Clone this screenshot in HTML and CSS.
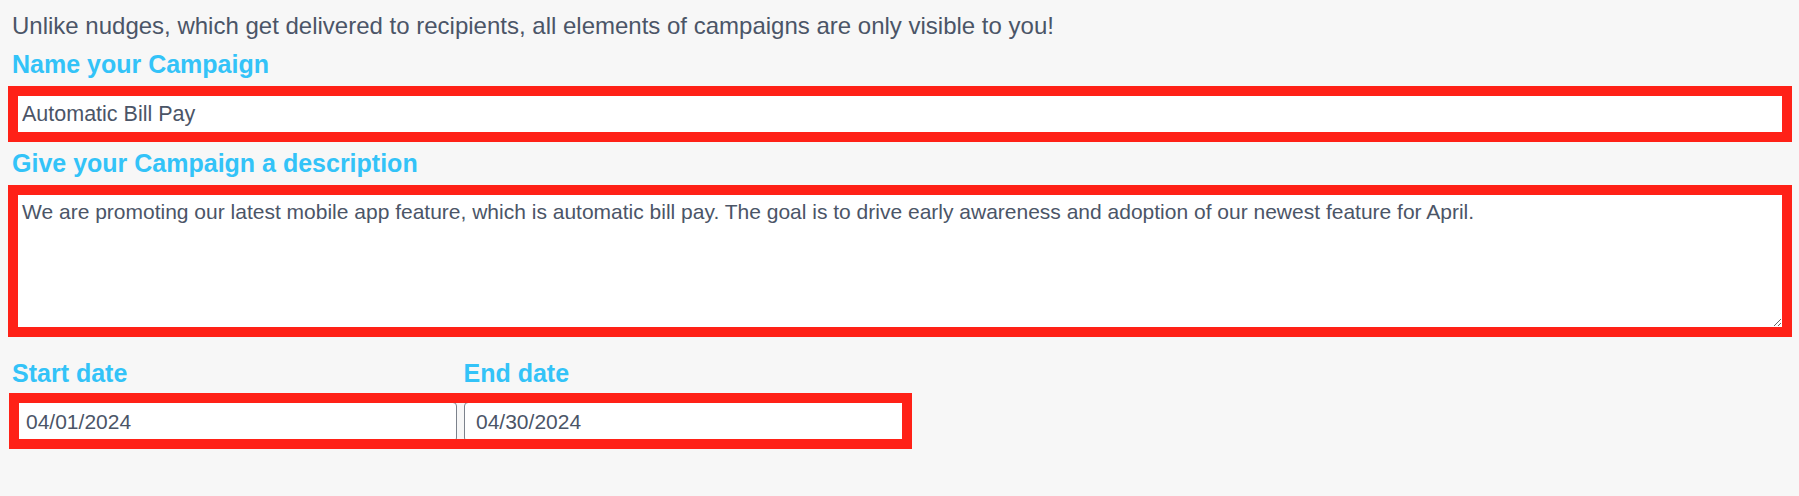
FILE: index.html
```html
<!DOCTYPE html>
<html lang="en">
<head>
    <meta charset="UTF-8">
    <meta name="viewport" content="width=device-width, initial-scale=1.0">
    <title>Campaign details</title>
    <link rel="stylesheet" href="styles.css">
</head>
<body>
    <form class="campaign-form">
        <p class="intro">Unlike nudges, which get delivered to recipients, all elements of campaigns are only visible to you!</p>

        <label class="field-label" for="campaignName">Name your Campaign</label>
        <input type="text" id="campaignName" class="highlight name-input" value="Automatic Bill Pay">

        <label class="field-label label-gap" for="campaignDesc">Give your Campaign a description</label>
        <textarea id="campaignDesc" class="highlight desc-input">We are promoting our latest mobile app feature, which is automatic bill pay. The goal is to drive early awareness and adoption of our newest feature for April.</textarea>

        <div class="date-labels">
            <label class="field-label date-label" for="startDate">Start date</label>
            <label class="field-label date-label" for="endDate">End date</label>
        </div>
        <div class="date-box">
            <input type="text" id="startDate" class="date-input" value="04/01/2024">
            <input type="text" id="endDate" class="date-input" value="04/30/2024">
        </div>
    </form>
</body>
</html>
```

FILE: styles.css
```css
body {
    font-family: "Liberation Sans", Arial, sans-serif;
    background-color: #f7f7f7;
    margin: 0;
    padding: 0 7px 0 8px;
}
.campaign-form {
    display: flex;
    flex-direction: column;
    align-items: flex-start;
}
.intro {
    font-size: 24px;
    line-height: 28px;
    color: #4b5567;
    margin: 12px 0 0 4px;
}
.field-label {
    display: block;
    font-size: 25px;
    line-height: 29px;
    font-weight: bold;
    color: #33c3f8;
    margin: 10px 0 7px 4px;
}
.label-gap {
    margin-top: 7px;
    margin-bottom: 7px;
}
.highlight {
    box-sizing: border-box;
    width: 100%;
    border: 10px solid #ff2117;
    background-color: #fff;
    font-family: "Liberation Sans", Arial, sans-serif;
    color: #4b5567;
    outline: none;
    margin: 0;
}
.name-input {
    height: 56px;
    padding: 0 4px;
    font-size: 21.5px;
}
.desc-input {
    display: block;
    height: 152px;
    padding: 5px 4px;
    font-size: 21px;
    line-height: 24px;
}
.date-labels {
    display: flex;
    width: 903px;
    margin-top: 22px;
}
.date-label {
    width: 453px;
    margin: 0 0 5px 4px;
}
.date-box {
    box-sizing: border-box;
    display: flex;
    gap: 7px;
    width: 903px;
    height: 56px;
    margin-left: 1px;
    border: 10px solid #ff2117;
    overflow: hidden;
}
.date-input {
    flex: 1;
    min-width: 0;
    height: 38px;
    margin: -1px 0;
    padding: 0 11px;
    border: 1px solid #7c828c;
    border-radius: 4px;
    background-color: #fff;
    font-family: "Liberation Sans", Arial, sans-serif;
    font-size: 21px;
    color: #4b5567;
    outline: none;
}
.date-input:first-child {
    margin-left: -5px;
}
.date-input:last-child {
    margin-right: -5px;
}
```
